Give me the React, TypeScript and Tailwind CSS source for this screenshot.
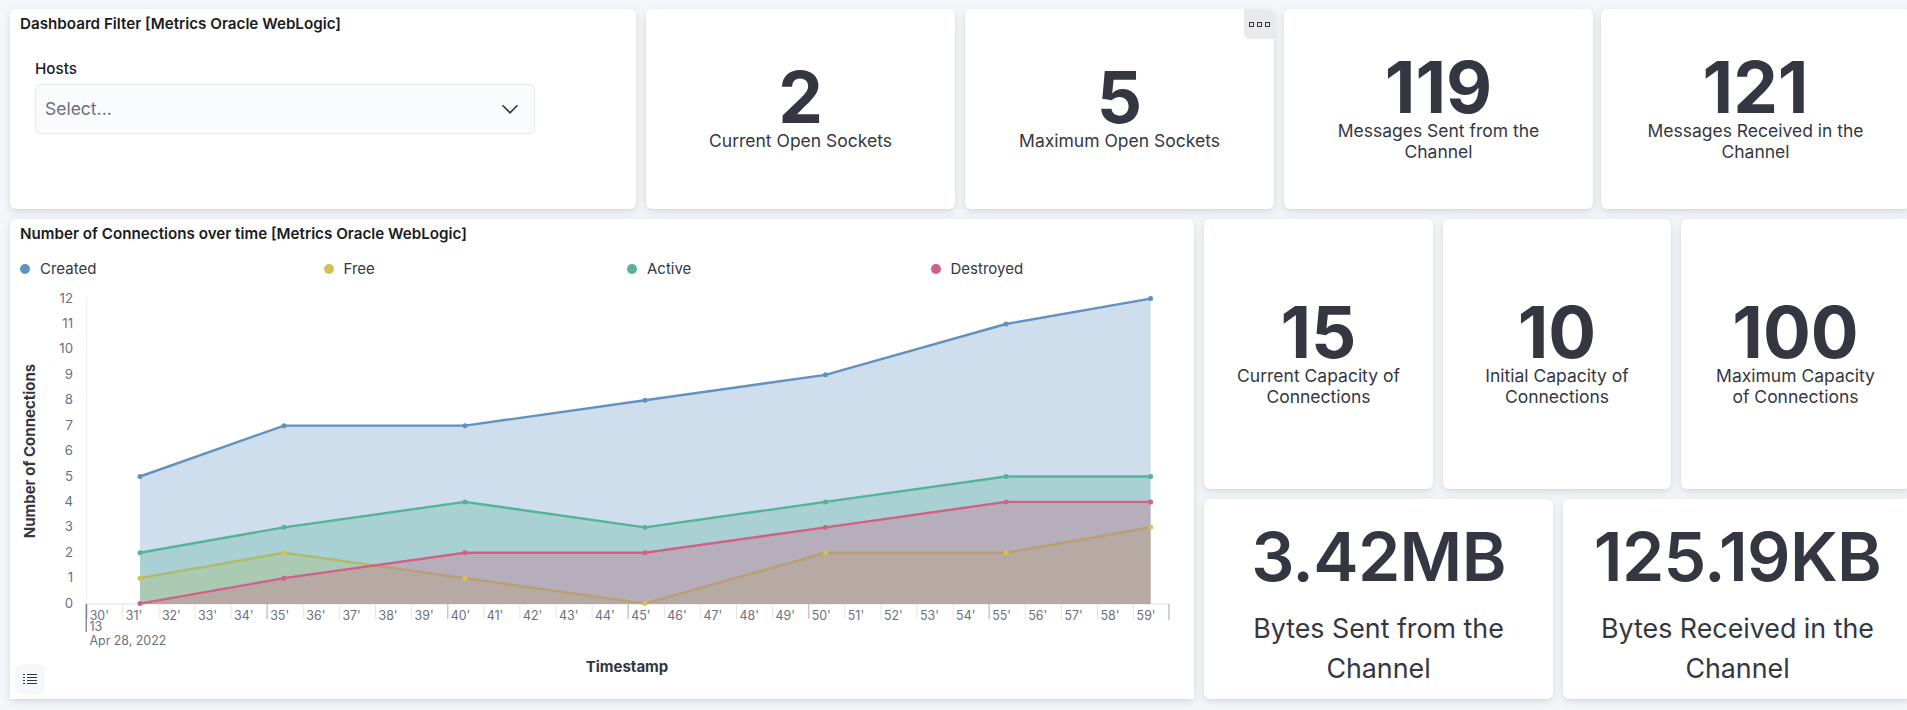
const font = "font-['Inter','Liberation_Sans',sans-serif]";

const panel = "bg-white rounded-[6px] shadow-[0_3px_10px_0_rgba(152,162,179,0.3),0_1px_2px_0_rgba(152,162,179,0.15)]";

const series = [
  { name: "Created", color: "#6092c0", values: [5, 7, 7, 8, 9, 11, 12] },
  { name: "Free", color: "#d6bf57", values: [1, 2, 1, 0, 2, 2, 3] },
  { name: "Active", color: "#54b399", values: [2, 3, 4, 3, 4, 5, 5] },
  { name: "Destroyed", color: "#d36086", values: [0, 1, 2, 2, 3, 4, 4] },
];

const pointX = [140, 284, 465, 645, 825.5, 1006, 1150.6];
const yOf = (v: number) => 603.6 - v * 25.42;

const minutes = [30, 31, 32, 33, 34, 35, 36, 37, 38, 39, 40, 41, 42, 43, 44, 45, 46, 47, 48, 49, 50, 51, 52, 53, 54, 55, 56, 57, 58, 59];

function MetricCard({ value, label, className }: { value: string; label: string; className: string }) {
  return (
    <div className={`${panel} ${className} flex flex-col items-center justify-center pt-[4px] text-center text-[#343741]`}>
      <div className="text-[71px] leading-[68px] font-bold">{value}</div>
      <div className="text-[17.5px] leading-[20.5px] px-[30px] mb-[7px]">{label}</div>
    </div>
  );
}

function BytesCard({ value, label, className }: { value: string; label: string; className: string }) {
  return (
    <div className={`${panel} ${className} flex flex-col items-center justify-center pt-[12px] text-center text-[#343741]`}>
      <div className="text-[68px] leading-[68px] font-semibold tracking-[-0.01em]">{value}</div>
      <div className="text-[26.8px] leading-[40px] mt-[18px] px-[30px]">{label}</div>
    </div>
  );
}

function Chart() {
  return (
    <svg viewBox="10 285 1184 414" className="block w-[1184px] h-[414px]">
      <line x1="86.7" y1="298" x2="86.7" y2="604" stroke="#eef0f3" strokeWidth="1" />
      <line x1="86.7" y1="604" x2="1169" y2="604" stroke="#e3e5e9" strokeWidth="1" />

      {series.map((s) => {
        const line = s.values.map((v, i) => `${pointX[i]},${yOf(v)}`).join(" ");
        return (
          <g key={s.name}>
            <polygon points={`140,604 ${line} 1150.6,604`} fill={s.color} opacity="0.3" />
            <polyline points={line} fill="none" stroke={s.color} strokeWidth="2.4" />
          </g>
        );
      })}
      {series.map((s) =>
        s.values.map((v, i) => <circle key={s.name + i} cx={pointX[i]} cy={yOf(v)} r="2.5" fill={s.color} />)
      )}

      {Array.from({ length: 13 }, (_, v) => (
        <text key={v} x="73" y={yOf(v) + 4} textAnchor="end" fontSize="13.2" fill="#69707d">
          {v}
        </text>
      ))}

      {minutes.map((m, i) => {
        const x = 86.7 + i * 36.1;
        const major = m % 5 === 0;
        return (
          <g key={m}>
            <line x1={x} y1="604" x2={x} y2="619" stroke={major ? "#c4c7cc" : "#e3e5e9"} strokeWidth={major ? 1.5 : 1} />
            <text x={x + 3} y="619.5" fontSize="12.4" fill="#69707d">
              {m}'
            </text>
          </g>
        );
      })}
      <line x1="86.2" y1="604" x2="86.2" y2="632" stroke="#69707d" strokeWidth="1.2" />
      <line x1="1169" y1="604" x2="1169" y2="620" stroke="#98a2b3" strokeWidth="1" />
      <text x="89.5" y="631" fontSize="12.4" fill="#69707d">13</text>
      <text x="89.5" y="645" fontSize="12.4" fill="#69707d">Apr 28, 2022</text>

      <text x="627" y="672" textAnchor="middle" fontSize="15" fontWeight="700" fill="#343741">
        Timestamp
      </text>
      <text transform="translate(35 451) rotate(-90)" textAnchor="middle" fontSize="15" fontWeight="700" fill="#343741">
        Number of Connections
      </text>
    </svg>
  );
}

export default function App() {
  return (
    <div className={`${font} w-[1907px] h-[710px] overflow-hidden bg-[#f5f7fa]`}>
      <div className="w-[1912px] pl-[10px] pt-[9px] flex flex-col gap-[10px]">
        {/* Top row */}
        <div className="flex gap-[10px] h-[200px]">
          <div className={`${panel} w-[626px] relative px-[10px] pt-[6px] text-[#1a1c21]`}>
            <h2 className="text-[15.2px] leading-[18px] font-semibold">Dashboard Filter [Metrics Oracle WebLogic]</h2>
            <div className="mt-[27px] ml-[15px] text-[15.2px] leading-[18px] font-medium">Hosts</div>
            <div className="mt-[6px] ml-[15px] w-[500px] h-[50px] rounded-[6px] bg-[#fafbfd] border border-[#e3e7f0] flex items-center justify-between pl-[9px] pr-[14px]">
              <span className="text-[17.5px] text-[#69707d]">Select...</span>
              <svg viewBox="0 0 16 16" className="w-[20px] h-[20px]" fill="none" stroke="#343741" strokeWidth="1.3">
                <path d="M2 5l6 6 6-6" />
              </svg>
            </div>
          </div>
          <MetricCard value="2" label="Current Open Sockets" className="w-[309px]" />
          <div className="relative">
            <MetricCard value="5" label="Maximum Open Sockets" className="w-[309px] h-full" />
            <div className="absolute top-0 right-0 w-[30px] h-[30px] bg-[#e9e9eb] rounded-tr-[6px] rounded-bl-[6px] flex items-center justify-center gap-[3px]">
              <span className="w-[5px] h-[5px] border border-[#343741]" />
              <span className="w-[5px] h-[5px] border border-[#343741]" />
              <span className="w-[5px] h-[5px] border border-[#343741]" />
            </div>
          </div>
          <MetricCard value="119" label="Messages Sent from the Channel" className="w-[309px]" />
          <MetricCard value="121" label="Messages Received in the Channel" className="w-[309px] -ml-[2px]" />
        </div>

        {/* Bottom area */}
        <div className="flex gap-[10px] h-[480px]">
          <div className={`${panel} w-[1184px] relative rounded-b-none`}>
            <h2 className="px-[10px] pt-[6px] text-[15.2px] leading-[18px] font-semibold text-[#1a1c21]">
              Number of Connections over time [Metrics Oracle WebLogic]
            </h2>
            <div className="mt-[13px] mb-[3px] ml-[10px] grid grid-cols-[303.5px_303.5px_303.5px_303.5px] h-[26px] text-[15px] text-[#343741]">
              {series.map((s) => (
                <div key={s.name} className="flex items-center gap-[10px]">
                  <span className="w-[10px] h-[10px] rounded-full" style={{ background: s.color }} />
                  <span>{s.name}</span>
                </div>
              ))}
            </div>
            <Chart />
            <div className="absolute left-[5px] bottom-[5px] w-[30px] h-[30px] rounded-[6px] bg-[#f5f7fa] flex items-center justify-center">
              <svg viewBox="0 0 16 16" className="w-[16px] h-[16px]" fill="none" stroke="#343741" strokeWidth="1">
                <path d="M5 3.5h10M5 6.5h10M5 9.5h10M5 12.5h10M1 3.5h2M1 6.5h2M1 9.5h2M1 12.5h2" />
              </svg>
            </div>
          </div>

          <div className="flex flex-col gap-[10px] flex-1">
            <div className="flex gap-[10px] h-[270px]">
              <MetricCard value="15" label="Current Capacity of Connections" className="w-[229px]" />
              <MetricCard value="10" label="Initial Capacity of Connections" className="w-[228px]" />
              <MetricCard value="100" label="Maximum Capacity of Connections" className="w-[229px]" />
            </div>
            <div className="flex gap-[10px] h-[200px]">
              <BytesCard value="3.42MB" label="Bytes Sent from the Channel" className="w-[349px]" />
              <BytesCard value="125.19KB" label="Bytes Received in the Channel" className="w-[349px]" />
            </div>
          </div>
        </div>
      </div>
    </div>
  );
}
